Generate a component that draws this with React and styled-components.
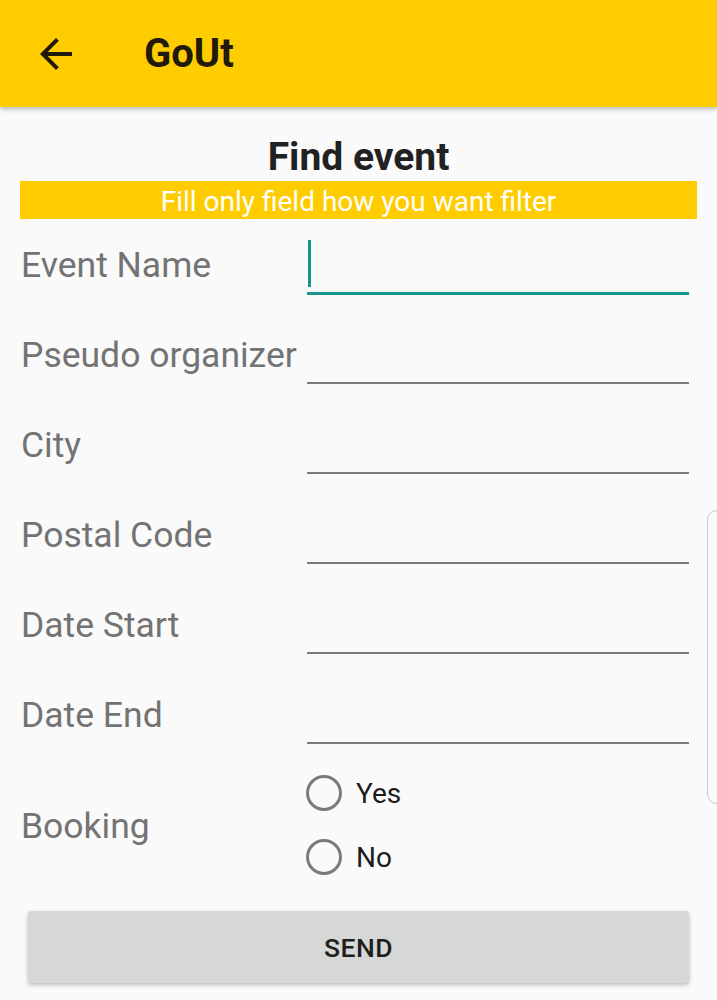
import styled, { createGlobalStyle } from "styled-components";

const GlobalStyle = createGlobalStyle`
  body {
    margin: 0;
    background: #fafafa;
    font-family: Roboto, "Noto Sans", sans-serif;
  }
`;

const Page = styled.div`
  position: relative;
  width: 717px;
  height: 1000px;
  overflow: hidden;
  background: #fafafa;
`;

const Toolbar = styled.header`
  height: 107px;
  background: #ffcc00;
  display: flex;
  align-items: center;
  box-shadow: 0 2px 5px rgba(0, 0, 0, 0.28);
  position: relative;
  z-index: 1;
`;

const BackButton = styled.div`
  width: 48px;
  height: 48px;
  margin-left: 32px;
  display: flex;
`;

const AppTitle = styled.h1`
  margin: 0 0 0 64px;
  font-size: 40px;
  font-weight: 700;
  color: #1f1a0a;
`;

const Content = styled.main`
  padding: 17px 20px 0;
  display: flex;
  flex-direction: column;
`;

const Heading = styled.h2`
  margin: 0;
  text-align: center;
  font-size: 39px;
  font-weight: 700;
  color: #212121;
  line-height: 66px;
  height: 57px;
`;

const Banner = styled.div`
  height: 38px;
  background: #ffcc00;
  color: #ffffff;
  font-size: 28px;
  line-height: 41px;
  text-align: center;
`;

const Form = styled.form`
  display: flex;
  flex-direction: column;
  padding-right: 8px;
`;

const Row = styled.div`
  display: grid;
  grid-template-columns: 287px 1fr;
  height: ${(p) => p.$height || 90}px;
  align-items: center;
`;

const Label = styled.label`
  font-size: 35.5px;
  color: #737373;
  padding-left: 1px;
  white-space: nowrap;
  margin-top: 2px;
`;

const Field = styled.div`
  align-self: end;
  height: 54px;
  margin-bottom: ${(p) => (p.$focused ? 14 : 15)}px;
  border-bottom: ${(p) => (p.$focused ? "3px solid #159688" : "2px solid #7b7b7b")};
  position: relative;
`;

const Cursor = styled.span`
  position: absolute;
  left: 1px;
  top: 2px;
  width: 3px;
  height: 47px;
  background: #159688;
`;

const RadioGroup = styled.div`
  display: flex;
  flex-direction: column;
  gap: 28px;
  margin-left: -1px;
`;

const RadioOption = styled.div`
  display: flex;
  align-items: center;
  gap: 14px;
  font-size: 28px;
  color: #1c1c1c;
`;

const RadioCircle = styled.span`
  width: 36px;
  height: 36px;
  box-sizing: border-box;
  border-radius: 50%;
  border: 3px solid #7a7a7a;
`;

const SendButton = styled.button`
  margin: 20px 0 0 8px;
  width: 661px;
  height: 72px;
  border: none;
  border-radius: 3px;
  background: #d6d7d7;
  box-shadow: 0 2px 4px rgba(0, 0, 0, 0.25);
  font-family: Roboto, sans-serif;
  font-size: 26.5px;
  font-weight: 500;
  color: #1e1e1e;
  letter-spacing: 0.5px;
`;

const EdgeHandle = styled.div`
  position: absolute;
  left: 707px;
  top: 510px;
  width: 30px;
  height: 294px;
  border: 1px solid #c8c8c8;
  border-radius: 10px;
  box-sizing: border-box;
`;

const fields = [
  { label: "Event Name", focused: true },
  { label: "Pseudo organizer" },
  { label: "City" },
  { label: "Postal Code" },
  { label: "Date Start" },
  { label: "Date End" },
];

export default function App() {
  return (
    <Page>
      <GlobalStyle />
      <Toolbar>
        <BackButton>
          <svg width="48" height="48" viewBox="0 0 24 24">
            <path
              fill="#1f1a0a"
              d="M20 11H7.83l5.59-5.59L12 4l-8 8 8 8 1.41-1.41L7.83 13H20v-2z"
            />
          </svg>
        </BackButton>
        <AppTitle>GoUt</AppTitle>
      </Toolbar>
      <Content>
        <Heading>Find event</Heading>
        <Banner>Fill only field how you want filter</Banner>
        <Form>
          {fields.map((f) => (
            <Row key={f.label}>
              <Label>{f.label}</Label>
              <Field $focused={f.focused}>{f.focused && <Cursor />}</Field>
            </Row>
          ))}
          <Row $height={132}>
            <Label>Booking</Label>
            <RadioGroup>
              <RadioOption>
                <RadioCircle />
                Yes
              </RadioOption>
              <RadioOption>
                <RadioCircle />
                No
              </RadioOption>
            </RadioGroup>
          </Row>
        </Form>
        <SendButton type="button">SEND</SendButton>
      </Content>
      <EdgeHandle />
    </Page>
  );
}
